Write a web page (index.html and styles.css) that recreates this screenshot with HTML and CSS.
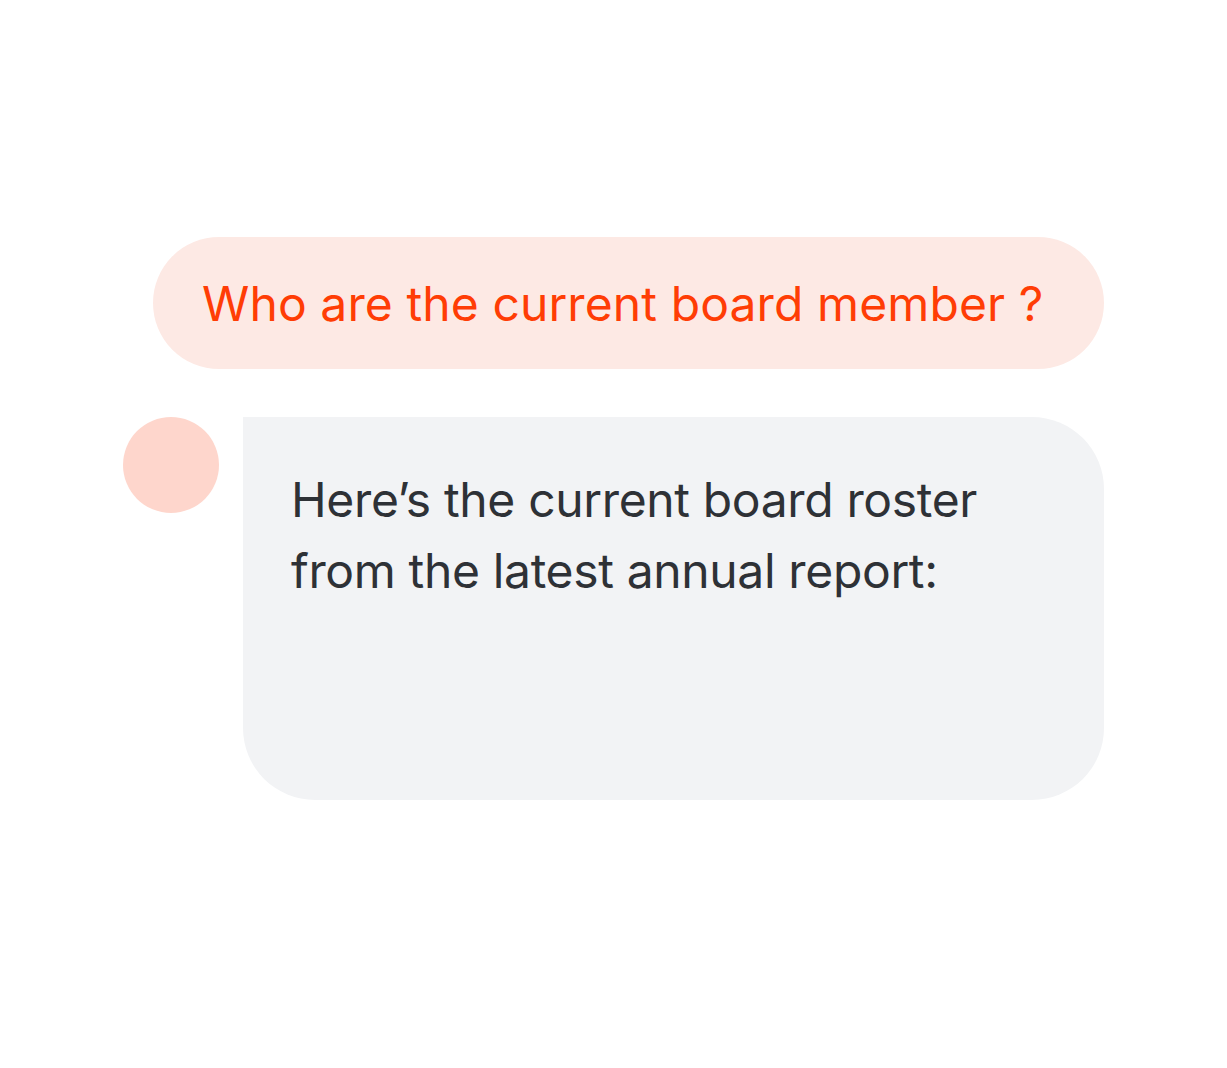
FILE: index.html
```html
<!DOCTYPE html>
<html lang="en">
<head>
<meta charset="utf-8">
<title>Chat</title>
<link rel="stylesheet" href="styles.css">
</head>
<body>
<main class="chat">
  <div class="msg-user">Who are the current board member ?</div>
  <div class="msg-bot-row">
    <div class="avatar"></div>
    <div class="msg-bot">
      <p>Here’s the current board roster<br>from the latest annual report:</p>
    </div>
  </div>
</main>
</body>
</html>
```
FILE: styles.css
```css
html, body {
  margin: 0;
  padding: 0;
  background: #ffffff;
}
body {
  font-family: "Inter", "Noto Sans", "Liberation Sans", sans-serif;
}
.chat {
  display: flex;
  flex-direction: column;
  gap: 48px;
  padding: 237px 123px 0 123px;
}
.msg-user {
  align-self: flex-end;
  box-sizing: border-box;
  width: 951px;
  height: 132px;
  display: flex;
  align-items: center;
  padding: 0 49px;
  border-radius: 66px;
  background: #fde9e4;
  color: #ff3d05;
  font-size: 48px;
  letter-spacing: 0.1px;
}
.msg-bot-row {
  display: flex;
  gap: 24px;
  align-items: flex-start;
}
.avatar {
  flex: none;
  width: 96px;
  height: 96px;
  border-radius: 50%;
  background: #fed6cc;
}
.msg-bot {
  flex: 1;
  box-sizing: border-box;
  height: 383px;
  padding: 47px 48px;
  background: #f2f3f5;
  border-radius: 0 72px 72px 72px;
}
.msg-bot p {
  margin: 0;
  color: #2e3136;
  font-size: 48px;
  line-height: 71px;
  letter-spacing: -0.35px;
}
```
